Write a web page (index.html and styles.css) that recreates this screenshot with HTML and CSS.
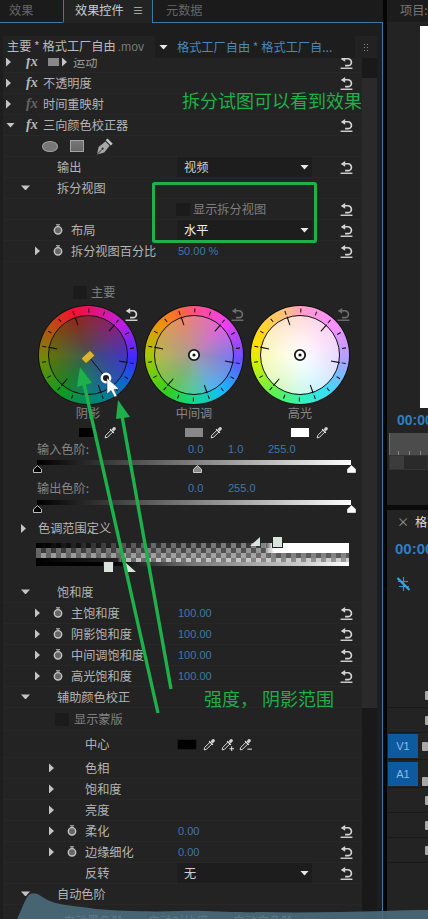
FILE: index.html
```html
<!DOCTYPE html>
<html lang="zh-CN">
<head>
    <meta charset="UTF-8">
    <meta name="viewport" content="width=device-width, initial-scale=1.0">
    <title>效果控件</title>
    <link rel="stylesheet" href="styles.css">
</head>
<body>
    <svg class="defs">
        <symbol id="i-reset" viewBox="0 0 14 14">
            <path d="M5.5 10.4H8.6a3.7 3.7 0 0 0 0-7.4H4" fill="none" stroke="currentColor" stroke-width="1.8"/>
            <path d="M5.6 0V6.2L.8 3.1z" fill="currentColor"/>
            <path d="M.6 13.2H13.4" stroke="currentColor" stroke-width="1.5"/>
        </symbol>
        <symbol id="i-watch" viewBox="0 0 10 11">
            <path d="M3 .8H7M5 .8V3" stroke="#bbb" stroke-width="1.1"/>
            <circle cx="5" cy="6.3" r="3.7" fill="#666" stroke="#c4c4c4" stroke-width="1.4"/>
        </symbol>
        <symbol id="i-drop" viewBox="0 0 14 14">
            <path d="M1.2 12.8L1.8 10.2L7.6 4.4L9.6 6.4L3.8 12.2z" fill="#2a2a2a" stroke="#e2e2e2" stroke-width="1"/>
            <path d="M6.6 3.4L10.6 7.4" stroke="#e2e2e2" stroke-width="1.4"/>
            <path d="M8.2 3.6L10.4 1.2C11.4 .4 13.4 2.2 12.7 3.4L10.4 5.8z" fill="#cfcfcf"/>
        </symbol>
        <symbol id="i-mark" viewBox="0 0 9 8">
            <path d="M4.5 .6L8.5 4.2V7.5H.5V4.2z" fill="currentColor" stroke="#e8e8e8" stroke-width=".8"/>
        </symbol>
        <symbol id="i-ticks" viewBox="0 0 98 98">
            <circle cx="49" cy="49" r="44.5" fill="none" stroke="#111" stroke-width="4" stroke-dasharray="1 14.53" transform="rotate(10 49 49)"/>
            <circle cx="49" cy="49" r="36" fill="none" stroke="#111" stroke-width="9" stroke-dasharray="1.1 36.6" transform="rotate(10 49 49)"/>
        </symbol>
        <symbol id="i-dot" viewBox="0 0 14 14">
            <circle cx="7" cy="7" r="5.2" fill="#fff" stroke="#1a1a1a" stroke-width="1.8"/>
            <circle cx="7" cy="7" r="1.6" fill="#111"/>
        </symbol>
    </svg>

    <div class="left">
        <div class="tabs">
            <div class="tab tab-first">效果</div>
            <div class="tab tab-active">效果控件 <span class="tab-menu">≡</span></div>
            <div class="tab tab-rest">元数据</div>
        </div>

        <div class="clip-head">
            <div class="clip-main">主要 * 格式工厂自由<span class="clip-ext">.mov</span></div>
            <div class="clip-seq"><i class="tw-down tw-white"></i><span>格式工厂自由 * 格式工厂自...</span></div>
            <i class="clip-grip"></i>
        </div>

        <div class="fx-body">
            <div class="fx-list">
                <div class="row row-soft">
                    <div class="name lv0"><span class="slot"><i class="tw"></i></span><b class="fx">fx</b><i class="motion-box"></i><i class="tw motion-tw"></i><span class="motion-text">运动</span></div>
                    <svg class="reset"><use href="#i-reset"/></svg>
                </div>
                <div class="row">
                    <div class="name lv0"><span class="slot"><i class="tw"></i></span><b class="fx">fx</b>不透明度</div>
                    <svg class="reset"><use href="#i-reset"/></svg>
                </div>
                <div class="row">
                    <div class="name lv0"><span class="slot"><i class="tw"></i></span><b class="fx fx-dim">fx</b>时间重映射</div>
                </div>
                <div class="row">
                    <div class="name lv0"><span class="slot"><i class="tw-down"></i></span><b class="fx">fx</b>三向颜色校正器</div>
                    <svg class="reset"><use href="#i-reset"/></svg>
                </div>
                <div class="row mask-row">
                    <i class="mask-ellipse"></i>
                    <i class="mask-square"></i>
                    <svg class="mask-pen" viewBox="0 0 17 17">
                        <path d="M1 16.5L2.6 9L9.4 3.6L13.6 7.8L8.2 14.6z" fill="#a8a8a8"/>
                        <path d="M1 16.5L6 11.4" stroke="#2a2a2a" stroke-width="1"/>
                        <circle cx="6.6" cy="10.6" r="1.1" fill="#2a2a2a"/>
                        <path d="M10.6 1.4L15.8 6.6" stroke="#c4c4c4" stroke-width="2.6"/>
                    </svg>
                </div>
                <div class="row">
                    <div class="name lv1"><span class="slot-wide"></span>输出</div>
                    <div class="select"><span>视频</span><i class="tw-down tw-white"></i></div>
                    <svg class="reset"><use href="#i-reset"/></svg>
                </div>
                <div class="row">
                    <div class="name lv1"><span class="slot-wide"><i class="tw-down"></i></span>拆分视图</div>
                </div>
                <div class="row">
                    <div class="name"></div>
                    <i class="check check-value"></i><span class="dim">显示拆分视图</span>
                    <svg class="reset"><use href="#i-reset"/></svg>
                </div>
                <div class="row">
                    <div class="name lv2"><span class="slot"></span><svg class="watch"><use href="#i-watch"/></svg>布局</div>
                    <div class="select select-bright"><span>水平</span><i class="tw-down tw-white"></i></div>
                    <svg class="reset"><use href="#i-reset"/></svg>
                </div>
                <div class="row">
                    <div class="name lv2"><span class="slot"><i class="tw"></i></span><svg class="watch"><use href="#i-watch"/></svg>拆分视图百分比</div>
                    <span class="val">50.00 %</span>
                    <svg class="reset"><use href="#i-reset"/></svg>
                </div>

                <div class="gap-row"></div>
                <div class="row master-row"><i class="check"></i><span class="dim">主要</span></div>

                <div class="wheels">
                    <div class="wheel wheel-shadow">
                        <div class="wheel-in"></div>
                        <svg class="wheel-ticks"><use href="#i-ticks"/></svg>
                        <svg class="wheel-marks" viewBox="0 0 98 98">
                            <path d="M50 51L67 72" stroke="#111" stroke-width="1"/>
                            <rect x="43" y="47.5" width="12" height="7" rx="1" fill="#d8b432" stroke="#5a4a10" stroke-width=".6" transform="rotate(-42 49 51)"/>
                            <circle cx="67" cy="72" r="4.2" fill="#1a1a1a" stroke="#fff" stroke-width="2.4"/>
                            <path d="M68 72V88L72 84.5L75.5 91L78 90L75 83.5L80 83z" fill="#fff" stroke="#335" stroke-width=".5"/>
                        </svg>
                        <svg class="wheel-reset"><use href="#i-reset"/></svg>
                    </div>
                    <div class="wheel wheel-mid">
                        <div class="wheel-in"></div>
                        <svg class="wheel-ticks"><use href="#i-ticks"/></svg>
                        <svg class="wheel-dot"><use href="#i-dot"/></svg>
                        <svg class="wheel-reset wheel-reset-dim"><use href="#i-reset"/></svg>
                    </div>
                    <div class="wheel wheel-high">
                        <div class="wheel-in"></div>
                        <svg class="wheel-ticks"><use href="#i-ticks"/></svg>
                        <svg class="wheel-dot"><use href="#i-dot"/></svg>
                        <svg class="wheel-reset wheel-reset-dim"><use href="#i-reset"/></svg>
                    </div>
                </div>
                <div class="wheel-labels">
                    <span>阴影</span><span>中间调</span><span>高光</span>
                </div>
                <div class="wheel-swatches">
                    <div class="swatch-cell"><i class="swatch swatch-black"></i><svg class="drop"><use href="#i-drop"/></svg></div>
                    <div class="swatch-cell"><i class="swatch swatch-gray"></i><svg class="drop"><use href="#i-drop"/></svg></div>
                    <div class="swatch-cell"><i class="swatch swatch-white"></i><svg class="drop"><use href="#i-drop"/></svg></div>
                </div>

                <div class="level-row">
                    <span class="level-name">输入色阶:</span>
                    <span class="level-val">0.0</span><span class="level-val">1.0</span><span class="level-val">255.0</span>
                </div>
                <div class="slider">
                    <div class="slider-bar"></div>
                    <div class="slider-marks">
                        <svg class="mark mark-black"><use href="#i-mark"/></svg>
                        <svg class="mark mark-gray"><use href="#i-mark"/></svg>
                        <svg class="mark mark-white"><use href="#i-mark"/></svg>
                    </div>
                </div>
                <div class="level-row level-row-out">
                    <span class="level-name">输出色阶:</span>
                    <span class="level-val">0.0</span><span class="level-val">255.0</span>
                </div>
                <div class="slider slider-out">
                    <div class="slider-bar"></div>
                    <div class="slider-marks">
                        <svg class="mark mark-black"><use href="#i-mark"/></svg>
                        <svg class="mark mark-white"><use href="#i-mark"/></svg>
                    </div>
                </div>

                <div class="row row-tone">
                    <div class="name lv1"><span class="slot-tone"><i class="tw"></i></span>色调范围定义</div>
                </div>
                <div class="tonal">
                    <div class="tone t1"></div>
                    <div class="tone t2"></div>
                    <div class="tone t3"></div>
                    <div class="tone t4"></div>
                    <div class="tone t5"></div>
                    <i class="tone-tri tone-tri-top"></i>
                    <i class="tone-box tone-box-top"></i>
                    <i class="tone-box tone-box-low"></i>
                    <i class="tone-tri tone-tri-low"></i>
                </div>

                <div class="row row-sat">
                    <div class="name lv1"><span class="slot-wide"><i class="tw-down"></i></span>饱和度</div>
                </div>
                <div class="row">
                    <div class="name lv2"><span class="slot"><i class="tw"></i></span><svg class="watch"><use href="#i-watch"/></svg>主饱和度</div>
                    <span class="val">100.00</span>
                    <svg class="reset"><use href="#i-reset"/></svg>
                </div>
                <div class="row">
                    <div class="name lv2"><span class="slot"><i class="tw"></i></span><svg class="watch"><use href="#i-watch"/></svg>阴影饱和度</div>
                    <span class="val">100.00</span>
                    <svg class="reset"><use href="#i-reset"/></svg>
                </div>
                <div class="row">
                    <div class="name lv2"><span class="slot"><i class="tw"></i></span><svg class="watch"><use href="#i-watch"/></svg>中间调饱和度</div>
                    <span class="val">100.00</span>
                    <svg class="reset"><use href="#i-reset"/></svg>
                </div>
                <div class="row">
                    <div class="name lv2"><span class="slot"><i class="tw"></i></span><svg class="watch"><use href="#i-watch"/></svg>高光饱和度</div>
                    <span class="val">100.00</span>
                    <svg class="reset"><use href="#i-reset"/></svg>
                </div>
                <div class="row">
                    <div class="name lv1"><span class="slot-wide"><i class="tw-down"></i></span>辅助颜色校正</div>
                </div>
                <div class="row row-matte"><i class="check"></i><span class="dim">显示蒙版</span></div>
                <div class="row row-center">
                    <div class="name lv3"><span class="slot"></span><span class="no-watch"></span>中心</div>
                    <i class="swatch swatch-center"></i>
                    <svg class="drop drop-first"><use href="#i-drop"/></svg>
                    <svg class="drop drop-next" viewBox="0 0 14 14"><use href="#i-drop" width="14" height="14"/><path d="M9 11.5H14M11.5 9V14" stroke="#e2e2e2" stroke-width="1.1"/></svg>
                    <svg class="drop drop-next" viewBox="0 0 14 14"><use href="#i-drop" width="14" height="14"/><path d="M9 12H14" stroke="#e2e2e2" stroke-width="1.1"/></svg>
                </div>
                <div class="row"><div class="name lv3"><span class="slot"><i class="tw"></i></span><span class="no-watch"></span>色相</div></div>
                <div class="row"><div class="name lv3"><span class="slot"><i class="tw"></i></span><span class="no-watch"></span>饱和度</div></div>
                <div class="row"><div class="name lv3"><span class="slot"><i class="tw"></i></span><span class="no-watch"></span>亮度</div></div>
                <div class="row">
                    <div class="name lv3"><span class="slot"><i class="tw"></i></span><svg class="watch"><use href="#i-watch"/></svg>柔化</div>
                    <span class="val">0.00</span>
                    <svg class="reset"><use href="#i-reset"/></svg>
                </div>
                <div class="row">
                    <div class="name lv3"><span class="slot"><i class="tw"></i></span><svg class="watch"><use href="#i-watch"/></svg>边缘细化</div>
                    <span class="val">0.00</span>
                    <svg class="reset"><use href="#i-reset"/></svg>
                </div>
                <div class="row">
                    <div class="name lv3"><span class="slot"></span><span class="no-watch"></span>反转</div>
                    <div class="select"><span>无</span><i class="tw-down tw-white"></i></div>
                    <svg class="reset"><use href="#i-reset"/></svg>
                </div>
                <div class="row">
                    <div class="name lv1"><span class="slot-wide"><i class="tw-down"></i></span>自动色阶</div>
                </div>
                <div class="auto-row">
                    <span>自动黑色阶</span><span>自动对比度</span><span>自动白色阶</span>
                </div>
            </div>
            <div class="scrollbar"><div class="thumb"></div></div>
        </div>
    </div>

    <div class="right">
        <div class="rt-tabs">项目:</div>
        <div class="monitor"><div class="video"></div></div>
        <div class="timecode">00:00</div>
        <div class="ruler"><i></i><i></i><i></i></div>
        <div class="mini"><i></i></div>
        <div class="band"></div>
        <div class="seq-tab"><span class="seq-x">×</span><span>格式</span></div>
        <div class="timecode timecode-seq">00:00</div>
        <div class="snap-row">
            <svg class="snap" viewBox="0 0 15 18">
                <path d="M7.5 2V16M2 6.5H12M3 11.5H13" fill="none" stroke="#2f93cc" stroke-width="1.2"/>
                <path d="M1.5 3L13.5 15" stroke="#3aa4de" stroke-width="2.2"/>
            </svg>
        </div>
        <div class="track"><i class="lock"></i></div>
        <div class="track"><i class="lock"></i></div>
        <div class="track track-tall"><span class="track-tag">V1</span><i class="lock"></i></div>
        <div class="track track-tall track-end"><span class="track-tag">A1</span><i class="lock"></i></div>
        <div class="track"><i class="lock"></i></div>
        <div class="track"><i class="lock"></i></div>
        <div class="track"><i class="lock"></i></div>
    </div>

    <!-- painted notes and the stray wave on top of the screenshot -->
    <svg class="wave" viewBox="0 0 428 30">
        <path d="M17 30C22 20 26 7 30 5C37 2 42 9 50 12C62 17 80 17 96 20C120 22 150 23 180 22C205 21 230 24 262 23C300 24 340 23 385 22C400 21 415 21 428 21V30z"/>
    </svg>
    <svg class="notes" viewBox="0 0 428 919">
        <rect x="153.5" y="183.5" width="162" height="58" fill="none" stroke="#1db04b" stroke-width="3" rx="1"/>
        <path d="M158 713L84 384" stroke="#1db04b" stroke-width="3.4" fill="none"/>
        <path d="M171 689L122 416" stroke="#1db04b" stroke-width="3.4" fill="none"/>
        <path d="M80 367L92 383L77 387z" fill="#1db04b"/>
        <path d="M118 400L130 417L116 419z" fill="#1db04b"/>
    </svg>
    <div class="note note-top">拆分试图可以看到效果</div>
    <div class="note note-low">强度， 阴影范围</div>
</body>
</html>
```

FILE: styles.css
```css
body {
    margin: 0;
    width: 428px;
    height: 919px;
    overflow: hidden;
    position: relative;
    display: flex;
    background-color: #232323;
    color: #b4b4b4;
    font-family: "Noto Sans CJK SC", "Liberation Sans", sans-serif;
    font-size: 12.2px;
    line-height: 1;
}
i {
    display: block;
}
.defs {
    position: absolute;
    width: 0;
    height: 0;
}

/* left panel */
.left {
    width: 382px;
    flex: none;
    border-right: 1px solid #3d7a9f;
    background-color: #1d1d1d;
}
.tabs {
    display: flex;
    height: 23px;
    margin-right: -1px;
    background-color: #1b1b1b;
}
.tab {
    box-sizing: border-box;
    padding-top: 4px;
    color: #666;
    border-bottom: 1px solid #3d7a9f;
}
.tab-first {
    width: 64px;
    padding-left: 9px;
    border-right: 1px solid #3d7a9f;
    border-bottom-right-radius: 2px;
}
.tab-active {
    width: 89px;
    padding-left: 11px;
    color: #ccc;
    background-color: #232323;
    border-bottom: none;
    border-right: 1px solid #3d7a9f;
}
.tab-menu {
    margin-left: 6px;
    font-size: 11px;
    color: #bbb;
}
.tab-rest {
    flex: 1;
    padding-left: 13px;
}
.clip-head {
    display: flex;
    align-items: center;
    height: 22px;
    margin: 13px 5px 0 3px;
    background-color: #222;
}
.clip-main {
    width: 152px;
    flex: none;
    padding-left: 4px;
    box-sizing: border-box;
    color: #bbb;
    white-space: nowrap;
}
.clip-ext {
    margin-left: 2px;
    color: #777;
    font-family: "Liberation Sans", sans-serif;
}
.clip-seq {
    display: flex;
    align-items: center;
    width: 200px;
    height: 22px;
    flex: none;
    padding-left: 4px;
    box-sizing: border-box;
    background-color: #1d1d1d;
    color: #4a88b8;
    white-space: nowrap;
}
.clip-seq .tw-down {
    margin-right: 9px;
}
.clip-grip {
    width: 6px;
    height: 8px;
    margin-left: 8px;
    background: radial-gradient(circle, #888 0.8px, transparent 1px) 0 0 / 3px 3px;
}
.fx-body {
    display: flex;
    height: 861px;
    overflow: hidden;
    margin-left: 3px;
}
.fx-list {
    width: 359px;
    flex: none;
    margin-top: -6px;
    background-color: #232323;
}
.scrollbar {
    width: 15px;
    flex: none;
    background-color: #191919;
}
.thumb {
    height: 630px;
    margin-top: 20px;
    background-color: #2a2a2a;
}

/* rows */
.row {
    display: flex;
    align-items: center;
    box-sizing: border-box;
    height: 21px;
    padding-right: 9px;
    border-bottom: 1px solid #272727;
}
.name {
    display: flex;
    align-items: center;
    width: 175px;
    flex: none;
    box-sizing: border-box;
    white-space: nowrap;
}
.lv0 { padding-left: 3px; }
.lv1 { padding-left: 18px; }
.lv2 { padding-left: 32px; }
.lv3 { padding-left: 46px; }
.slot {
    width: 14px;
    flex: none;
}
.slot-wide {
    width: 36px;
    flex: none;
}
.slot-tone {
    width: 17px;
    flex: none;
}
.tw {
    width: 5px;
    height: 9px;
    background-color: #c4c4c4;
    clip-path: polygon(0 0, 100% 50%, 0 100%);
}
.tw-down {
    width: 9px;
    height: 5px;
    background-color: #c4c4c4;
    clip-path: polygon(0 0, 100% 0, 50% 100%);
}
.tw-white {
    background-color: #e8e8e8;
    flex: none;
}
.fx {
    width: 17px;
    margin-left: 6px;
    flex: none;
    font-family: "Liberation Serif", serif;
    font-style: italic;
    font-size: 14px;
    color: #b8b8b8;
}
.fx-dim {
    color: #666;
}
.row-soft {
    color: #999;
}
.motion-box {
    width: 11px;
    height: 8px;
    margin-left: 5px;
    background-color: #888;
}
.motion-tw {
    margin-left: 3px;
}
.motion-text {
    margin-left: 6px;
}
.watch {
    width: 10px;
    height: 11px;
    margin: 0 8px 0 4px;
    flex: none;
}
.no-watch {
    width: 22px;
    flex: none;
}
.reset {
    width: 13px;
    height: 13px;
    margin-left: auto;
    flex: none;
    color: #d4d4d4;
}
.val {
    color: #3f78a8;
    font-family: "Liberation Sans", sans-serif;
    font-size: 11px;
}
.dim {
    color: #7f7f7f;
}
.check {
    width: 14px;
    height: 13px;
    flex: none;
    background-color: #1b1b1b;
}
.check-value {
    margin: 0 3px 0 -2px;
}
.select {
    display: flex;
    align-items: center;
    justify-content: space-between;
    box-sizing: border-box;
    width: 135px;
    height: 20px;
    margin-left: -1px;
    padding: 0 3px 0 7px;
    background-color: #1d1d1d;
    color: #d0d0d0;
}
.select-bright {
    color: #eee;
}
.mask-row {
    padding-left: 39px;
}
.mask-ellipse {
    width: 16px;
    height: 11px;
    border-radius: 50%;
    background-color: #777;
    border: 1px solid #a4a4a4;
    box-sizing: border-box;
}
.mask-square {
    width: 14px;
    height: 12px;
    margin-left: 12px;
    background: linear-gradient(#777, #666);
    border: 1px solid #a4a4a4;
    box-sizing: border-box;
}
.mask-pen {
    width: 17px;
    height: 17px;
    margin-left: 12px;
}
.gap-row {
    height: 20px;
}
.master-row {
    padding-left: 70px;
    border-bottom: none;
}
.master-row .check {
    margin-right: 4px;
}
.row-matte {
    height: 23px;
    padding-left: 52px;
}
.row-matte .check {
    margin-right: 5px;
}
.row-center {
    height: 27px;
}
.drop-first {
    margin-left: 7px;
}
.drop-next {
    margin-left: 5px;
}

/* colour wheels */
.wheels {
    display: flex;
    gap: 8px;
    padding: 3px 0 0 36px;
}
.wheel {
    position: relative;
    width: 98px;
    height: 98px;
    border-radius: 50%;
    box-shadow: 0 0 0 1px #111;
}
.wheel-in {
    position: absolute;
    inset: 9px;
    border-radius: 50%;
    border: 1px solid #111;
    box-sizing: border-box;
}
.wheel-ticks,
.wheel-marks {
    position: absolute;
    inset: 0;
    width: 98px;
    height: 98px;
    overflow: visible;
}
.wheel-dot {
    position: absolute;
    left: 42px;
    top: 42px;
    width: 14px;
    height: 14px;
}
.wheel-reset {
    position: absolute;
    left: 86px;
    top: 2px;
    width: 13px;
    height: 13px;
    color: #d8d8d8;
}
.wheel-reset-dim {
    color: #6e6e6e;
}
.wheel-shadow {
    background: conic-gradient(from -20deg, #f5102e, #c41de0 65deg, #3a2cff 115deg, #0a6cc8 150deg, #02808a 180deg, #0f9a22 235deg, #6f8a06 285deg, #c04a12 330deg, #f5102e);
}
.wheel-shadow .wheel-in {
    background: radial-gradient(circle, rgba(60, 85, 95, 0.85), rgba(60, 85, 95, 0) 62%),
        conic-gradient(from -20deg, #8a2c1c, #80247a 65deg, #4038c0 115deg, #1e62a0 170deg, #10806a 200deg, #1a8428 235deg, #5f7010 290deg, #8a2c1c);
}
.wheel-mid {
    background: conic-gradient(from -20deg, #fb6a35, #ff4e90 25deg, #f040f0 65deg, #6a50ff 115deg, #18b8ff 160deg, #10d8a0 195deg, #30d020 235deg, #a8c800 290deg, #f09010 335deg, #fb6a35);
}
.wheel-mid .wheel-in {
    background: radial-gradient(circle, rgba(170, 150, 160, 0.9), rgba(170, 150, 160, 0) 68%),
        conic-gradient(from -20deg, #ea8a66, #de62de 65deg, #7a7aee 115deg, #50b4f0 170deg, #50cca0 200deg, #64c850 235deg, #b8b848 290deg, #ea8a66);
}
.wheel-high {
    background: conic-gradient(from -20deg, #ffc080, #ff9ccc 25deg, #ff90ff 65deg, #b0a0ff 115deg, #40d8ff 160deg, #30f0c0 195deg, #60f050 235deg, #e0f000 285deg, #ffe000 305deg, #ffc080);
}
.wheel-high .wheel-in {
    background: radial-gradient(circle, #fff, rgba(255, 255, 255, 0) 88%),
        conic-gradient(from -20deg, #ffd8c0, #ffc8f0 65deg, #e0d0ff 115deg, #c0f0ff 170deg, #c0f8e0 200deg, #d0f8b0 235deg, #f8f8a0 290deg, #ffd8c0);
}
.wheel-labels {
    display: flex;
    gap: 8px;
    height: 16px;
    margin-top: 3px;
    padding-left: 36px;
    color: #858585;
}
.wheel-labels span {
    width: 98px;
    text-align: center;
}
.wheel-swatches {
    display: flex;
    gap: 8px;
    height: 19px;
    padding-left: 36px;
}
.swatch-cell {
    display: grid;
    grid-template-columns: 18px 14px;
    column-gap: 7px;
    align-items: center;
    width: 98px;
    padding-left: 40px;
    box-sizing: border-box;
}
.swatch {
    height: 9px;
}
.swatch-black {
    background-color: #000;
    width: 15px;
}
.swatch-gray {
    background-color: #888;
}
.swatch-white {
    background-color: #fff;
}
.swatch-center {
    width: 18px;
    background-color: #000;
    border-radius: 1px;
    box-shadow: 0 0 0 1px #1a1a1a;
}
.drop {
    width: 13px;
    height: 13px;
    flex: none;
}

/* level sliders */
.level-row {
    display: flex;
    align-items: center;
    height: 14px;
    padding-left: 34px;
}
.level-row-out {
    margin-top: 8px;
}
.level-name {
    width: 151px;
    flex: none;
    color: #858585;
}
.level-val {
    width: 40px;
    color: #3f78a8;
    font-family: "Liberation Sans", sans-serif;
    font-size: 11px;
}
.slider {
    width: 314px;
    margin: 4px 0 0 34px;
}
.slider-out {
    margin-top: 5px;
}
.slider-bar {
    height: 5px;
    background: linear-gradient(90deg, #000, #fff);
}
.slider-marks {
    display: flex;
    justify-content: space-between;
    margin: 0 -5px 0 -4px;
}
.mark {
    width: 9px;
    height: 8px;
}
.mark-black { color: #000; }
.mark-gray { color: #8a8a8a; margin-left: 5px; }
.mark-white { color: #fff; }

/* tonal range */
.row-tone {
    margin-top: 5px;
    border-bottom: none;
}
.tonal {
    position: relative;
    width: 313px;
    margin: 4px 0 0 33px;
}
.tone {
    height: 5px;
}
.t1 {
    background: linear-gradient(90deg, transparent 73%, #fff 76%),
        repeating-linear-gradient(90deg, rgba(0, 0, 0, 0.55) 0 5px, transparent 5px 10px),
        linear-gradient(90deg, #000, #666 35%, #999);
}
.t2 {
    background: linear-gradient(90deg, transparent 73%, #fff 76%),
        repeating-linear-gradient(90deg, transparent 0 5px, rgba(0, 0, 0, 0.45) 5px 10px),
        linear-gradient(90deg, #666, #aaa);
}
.t3 {
    background: linear-gradient(90deg, transparent 74%, rgba(60, 60, 60, 0.35) 76%),
        repeating-linear-gradient(90deg, rgba(0, 0, 0, 0.35) 0 5px, transparent 5px 10px),
        linear-gradient(90deg, #999, #aaa);
}
.t4 {
    height: 4px;
    background: linear-gradient(90deg, #000, #222 26%, transparent 28%),
        repeating-linear-gradient(90deg, rgba(255, 255, 255, 0.55) 0 5px, transparent 5px 10px),
        linear-gradient(90deg, #555, #999);
}
.t5 {
    height: 4px;
    background: linear-gradient(90deg, #000 25%, #777 50%, #ccc 85%, #fff);
}
.tone-box {
    position: absolute;
    width: 9px;
    height: 10px;
    background-color: #d8e4dc;
    border: 1px solid #222;
}
.tone-box-top {
    left: 236px;
    top: -7px;
}
.tone-box-low {
    left: 67px;
    top: 18px;
}
.tone-tri {
    position: absolute;
    width: 10px;
    height: 9px;
    background-color: #d8e4dc;
}
.tone-tri-top {
    left: 214px;
    top: -6px;
    clip-path: polygon(100% 0, 100% 100%, 0 100%);
}
.tone-tri-low {
    left: 90px;
    top: 20px;
    clip-path: polygon(0 0, 100% 100%, 0 100%);
}
.row-sat {
    margin-top: 16px;
}
.auto-row {
    display: flex;
    gap: 24px;
    padding: 10px 0 0 60px;
    color: #cfdde3;
    white-space: nowrap;
}

/* right column */
.right {
    width: 41px;
    flex: none;
    border-left: 4px solid #050505;
    overflow: hidden;
    background-color: #232323;
}
.rt-tabs {
    height: 22px;
    padding: 4px 0 0 13px;
    box-sizing: border-box;
    background-color: #1c1c1c;
    color: #777;
    white-space: nowrap;
}
.monitor {
    height: 386px;
    box-sizing: border-box;
    padding: 4px 0 0 33px;
}
.video {
    height: 382px;
    background-color: #fff;
}
.timecode {
    height: 25px;
    padding: 5px 0 0 10px;
    box-sizing: border-box;
    color: #2f7fc0;
    font-family: "Liberation Sans", sans-serif;
    font-size: 14px;
    font-weight: bold;
    white-space: nowrap;
}
.ruler {
    display: flex;
    gap: 10px;
    align-items: flex-end;
    box-sizing: border-box;
    height: 22px;
    margin-left: 2px;
    padding-left: 8px;
    border-left: 1px solid #3d7a9f;
    background-color: #4c4c4c;
}
.ruler i {
    width: 1px;
    height: 4px;
    background-color: #888;
}
.mini {
    box-sizing: border-box;
    height: 15px;
    margin-left: 2px;
    border: 1px solid #333;
    background-color: #2a2a2a;
}
.mini i {
    width: 14px;
    height: 13px;
    background-color: #3c3c3c;
}
.band {
    height: 5px;
    margin-top: 35px;
    background-color: #0a0a0a;
}
.seq-tab {
    display: flex;
    align-items: center;
    height: 25px;
    padding-left: 10px;
    color: #ddd;
    white-space: nowrap;
}
.seq-x {
    width: 18px;
    flex: none;
    color: #999;
}
.timecode-seq {
    height: 26px;
    padding: 6px 0 0 8px;
    font-size: 15px;
}
.snap-row {
    height: 122px;
    padding: 14px 0 0 9px;
    box-sizing: border-box;
}
.snap {
    width: 15px;
    height: 18px;
}
.track {
    display: flex;
    align-items: center;
    box-sizing: border-box;
    height: 25px;
    padding-left: 1px;
    border-bottom: 1px solid #1a1a1a;
}
.track-tall {
    height: 27px;
}
.track-end {
    height: 28px;
    align-items: flex-end;
    padding-bottom: 1px;
}
.track-tag {
    display: block;
    width: 32px;
    height: 24px;
    line-height: 24px;
    text-align: center;
    background-color: #0d5a9e;
    color: #8dbbe4;
    font-family: "Liberation Sans", sans-serif;
    font-size: 11px;
}
.lock {
    width: 6px;
    height: 9px;
    margin-left: 37px;
    flex: none;
    border-radius: 1px;
    background-color: #a8a8a8;
}
.track-tag + .lock {
    margin-left: 4px;
}

/* painted on top */
.wave {
    position: absolute;
    left: 0;
    bottom: 0;
    width: 428px;
    height: 30px;
    fill: #4c6e7e;
    opacity: 0.88;
}
.notes {
    position: absolute;
    left: 0;
    top: 0;
    width: 428px;
    height: 919px;
}
.note {
    position: absolute;
    color: #1fae4a;
    font-size: 18px;
    white-space: nowrap;
}
.note-top {
    left: 182px;
    top: 91px;
}
.note-low {
    left: 204px;
    top: 689px;
}
```
